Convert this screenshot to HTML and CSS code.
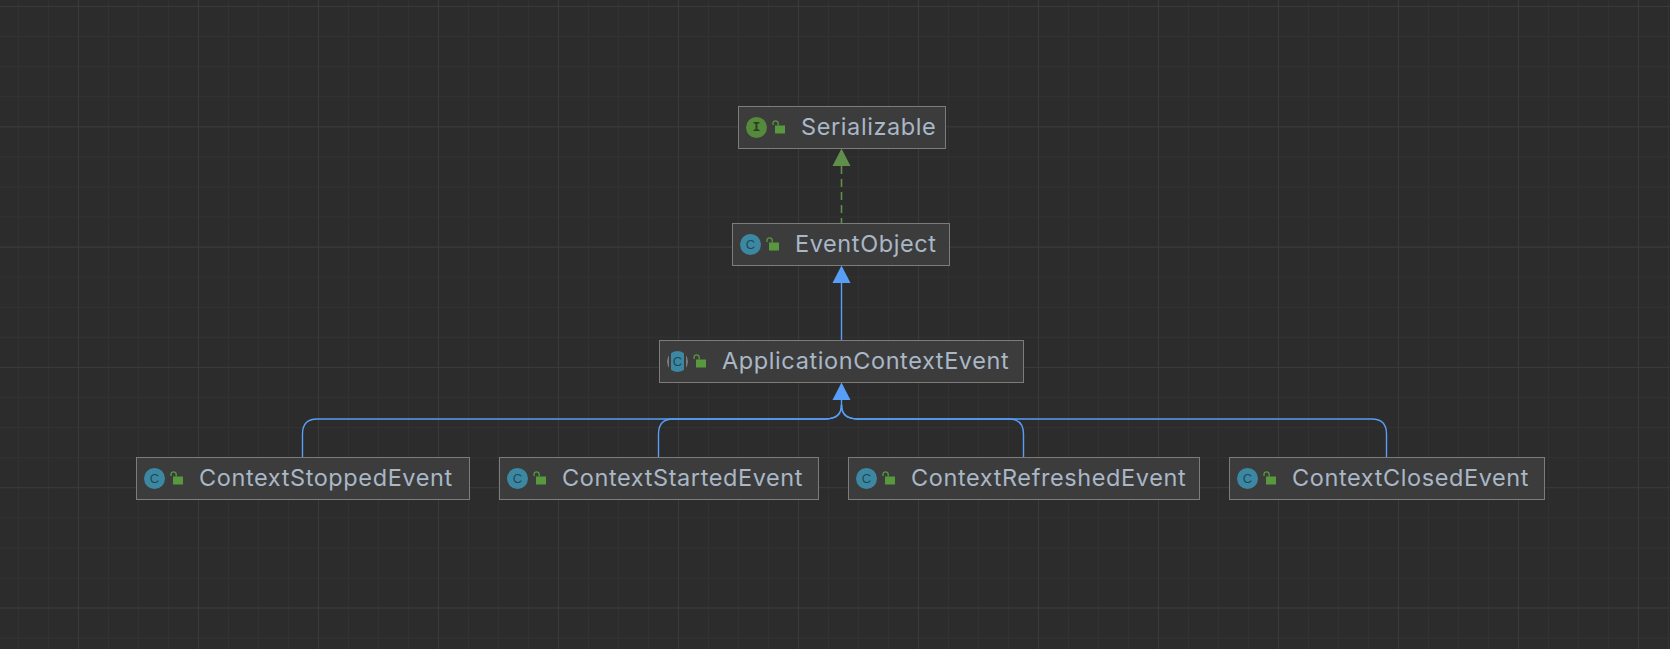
FILE: index.html
```html
<!DOCTYPE html>
<html lang="en">
<head>
<meta charset="utf-8">
<title>ApplicationContextEvent hierarchy</title>
<link rel="stylesheet" href="styles.css">
</head>
<body>
<main class="canvas">
  <svg class="edges" width="1670" height="649" viewBox="0 0 1670 649">
    <path class="edge-green" d="M841.5 166V223"/>
    <polygon class="head-green" points="841.5,148.5 832.5,166 850.5,166"/>
    <path class="edge-blue" d="M841.5 283V340"/>
    <polygon class="head-blue" points="841.5,265.5 832.5,283 850.5,283"/>
    <path class="edge-blue" d="M841.5 400V405Q841.5 418.5 826 419H317Q302.5 419 302.5 434V457"/>
    <path class="edge-blue" d="M841.5 405Q841.5 418.5 826 419H673Q658.5 419 658.5 434V457"/>
    <path class="edge-blue" d="M841.5 405Q841.5 418.5 857 419H1009Q1023.5 419 1023.5 434V457"/>
    <path class="edge-blue" d="M841.5 405Q841.5 418.5 857 419H1372Q1386.5 419 1386.5 434V457"/>
    <polygon class="head-blue" points="841.5,382.5 832.5,400 850.5,400"/>
  </svg>

  <svg class="defs" width="0" height="0" aria-hidden="true">
    <symbol id="lock" viewBox="0 0 14 14">
      <rect class="lock-body" x="3" y="5.5" width="10" height="8"/>
      <path class="lock-shackle" d="M1 5V3.4A2.6 2.6 0 0 1 6.2 3.4V5.5"/>
    </symbol>
  </svg>

  <div class="node n-serializable">
    <span class="badge interface">I</span>
    <svg class="lock"><use href="#lock"/></svg>
    <span class="label">Serializable</span>
  </div>
  <div class="node n-eventobject">
    <span class="badge class">C</span>
    <svg class="lock"><use href="#lock"/></svg>
    <span class="label">EventObject</span>
  </div>
  <div class="node n-appcontext">
    <span class="badge abstract">C</span>
    <svg class="lock"><use href="#lock"/></svg>
    <span class="label">ApplicationContextEvent</span>
  </div>
  <div class="node n-stopped">
    <span class="badge class">C</span>
    <svg class="lock"><use href="#lock"/></svg>
    <span class="label">ContextStoppedEvent</span>
  </div>
  <div class="node n-started">
    <span class="badge class">C</span>
    <svg class="lock"><use href="#lock"/></svg>
    <span class="label">ContextStartedEvent</span>
  </div>
  <div class="node n-refreshed">
    <span class="badge class">C</span>
    <svg class="lock"><use href="#lock"/></svg>
    <span class="label">ContextRefreshedEvent</span>
  </div>
  <div class="node n-closed">
    <span class="badge class">C</span>
    <svg class="lock"><use href="#lock"/></svg>
    <span class="label">ContextClosedEvent</span>
  </div>
</main>
</body>
</html>
```
FILE: styles.css
```css
* { box-sizing: border-box; }
html, body { margin: 0; padding: 0; overflow: hidden; }
body { background: #2c2c2c; }

.canvas {
  position: relative;
  width: 1670px;
  height: 649px;
  overflow: hidden;
  background-color: #2c2c2c;
  background-image:
    linear-gradient(90deg, #3a3a3a 1px, transparent 1px),
    linear-gradient(#3a3a3a 1px, transparent 1px),
    linear-gradient(90deg, #323232 1px, transparent 1px),
    linear-gradient(#323232 1px, transparent 1px);
  background-size: 120px 100%, 100% 120.3px, 30px 100%, 100% 30.08px;
  background-position: 78px 0, 0 6px, 18px 0, 0 6px;
}

.edges { position: absolute; left: 0; top: 0; }
.defs { position: absolute; }
.edge-blue { fill: none; stroke: #589df6; stroke-width: 1.4; }
.edge-green { fill: none; stroke: #5f8f4a; stroke-width: 1.6; stroke-dasharray: 8 5; }
.head-blue { fill: #589df6; }
.head-green { fill: #5f8f4a; }

.node {
  position: absolute;
  display: flex;
  align-items: center;
  height: 43px;
  padding-left: 7px;
  background: #3c3c3c;
  border: 1px solid #7c7c7c;
}
.n-serializable { left: 738px; top: 106px; width: 208px; }
.n-eventobject { left: 732px; top: 223px; width: 218px; }
.n-appcontext { left: 659px; top: 340px; width: 365px; }
.n-stopped { left: 136px; top: 457px; width: 334px; }
.n-started { left: 499px; top: 457px; width: 320px; }
.n-refreshed { left: 848px; top: 457px; width: 352px; }
.n-closed { left: 1229px; top: 457px; width: 316px; }

.badge {
  flex: none;
  display: flex;
  align-items: center;
  justify-content: center;
  width: 21px;
  height: 21px;
  border-radius: 50%;
  font-family: "Liberation Sans", sans-serif;
  font-size: 13px;
  line-height: 1;
}
.badge.class { background: #3c88a3; color: #1f4856; }
.badge.interface {
  background: #558a3c;
  color: #26401b;
  font-family: "Liberation Mono", monospace;
  font-size: 13px;
  font-weight: 700;
}
.badge.abstract {
  background: linear-gradient(90deg, #7d7d7d 0 2px, #3c3c3c 2px 4px, #3c88a3 4px 17px, #3c3c3c 17px 19px, #7d7d7d 19px);
  color: #1f4856;
}

.lock { flex: none; width: 14px; height: 14px; margin-left: 5px; margin-bottom: 2px; }
.lock-body { fill: #58983f; }
.lock-shackle { fill: none; stroke: #58983f; stroke-width: 1.3; }

.label {
  margin-left: 15px;
  margin-bottom: 2px;
  font-family: Inter, "Liberation Sans", sans-serif;
  font-size: 23.5px;
  letter-spacing: 0.6px;
  line-height: 1;
  color: #a9b7c6;
  white-space: nowrap;
}
```
